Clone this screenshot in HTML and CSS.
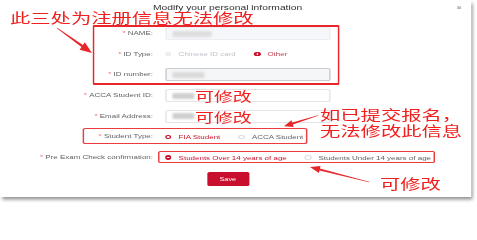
FILE: index.html
```html
<!DOCTYPE html>
<html lang="en">
<head>
<meta charset="utf-8">
<title>Modify your personal information</title>
<link rel="stylesheet" href="styles.css">
</head>
<body>
<div class="stage">
  <div class="card">
    <div class="header">
      <span class="title">Modify your personal information</span>
      <span class="close"><svg viewBox="0 0 10 10" preserveAspectRatio="none"><path d="M1 1L9 9M9 1L1 9" stroke="#aeb1b6" stroke-width="1" vector-effect="non-scaling-stroke" fill="none"/></svg></span>
    </div>
    <form class="form">
      <div class="row">
        <label class="label"><i class="req">*</i>NAME:</label>
        <div class="input is-disabled"><span class="blur blur-name"></span></div>
      </div>
      <div class="row">
        <label class="label"><i class="req">*</i>ID Type:</label>
        <div class="radios">
          <span class="radio is-disabled"><span class="dot"></span>Chinese ID card</span>
          <span class="radio is-checked is-soft"><span class="dot"></span>Other</span>
        </div>
      </div>
      <div class="row">
        <label class="label"><i class="req">*</i>ID number:</label>
        <div class="input is-dim"><span class="blur blur-id"></span></div>
      </div>
      <div class="row">
        <label class="label"><i class="req">*</i>ACCA Student ID:</label>
        <div class="input"><span class="blur blur-acca"></span></div>
      </div>
      <div class="row">
        <label class="label"><i class="req">*</i>Email Address:</label>
        <div class="input"><span class="blur blur-mail"></span></div>
      </div>
      <div class="row">
        <label class="label"><i class="req">*</i>Student Type:</label>
        <div class="radios">
          <span class="radio is-checked"><span class="dot"></span>FIA Student</span>
          <span class="radio"><span class="dot"></span>ACCA Student</span>
        </div>
      </div>
      <div class="row">
        <label class="label"><i class="req">*</i>Pre Exam Check confirmation:</label>
        <div class="radios">
          <span class="radio is-checked"><span class="dot"></span>Students Over 14 years of age</span>
          <span class="radio"><span class="dot"></span>Students Under 14 years of age</span>
        </div>
      </div>
      <div class="row row-foot">
        <span></span>
        <button type="button" class="save">Save</button>
      </div>
    </form>

    <div class="mark mark-1"></div>
    <div class="mark mark-2"></div>
    <div class="mark mark-3"></div>

    <span class="note note-top">此三处为注册信息无法修改</span>
    <span class="note note-edit note-edit-1">可修改</span>
    <span class="note note-edit note-edit-2">可修改</span>
    <span class="note note-lock note-lock-1">如已提交报名，</span>
    <span class="note note-lock note-lock-2">无法修改此信息</span>
    <span class="note note-edit-3">可修改</span>

    <svg class="arrows" viewBox="0 0 471.25 203" preserveAspectRatio="none">
      <polygon points="56.77,28.33 81.5,47.0 79.6,49.7 92,53 84.8,42.3 82.9,45.0 57.23,27.67"/>
      <polygon points="318.1,115.8 292.9,124.6 293.7,126.9 284,126.3 291.5,120.3 292.3,122.6 317.9,115.2"/>
      <polygon points="369.1,181.7 319.9,168.5 320.6,166.1 310,167 318.8,172.9 319.5,170.5 368.9,182.3"/>
    </svg>
  </div>
</div>
</body>
</html>
```
FILE: styles.css
```css
html, body {
  margin: 0;
  padding: 0;
  background: #ffffff;
  overflow: hidden;
}

.stage {
  width: 329px;
  height: 203px;
  transform: scaleX(1.45);
  transform-origin: 0 0;
}

.card {
  position: relative;
  width: 325px;
  height: 197px;
  background: #ffffff;
  box-shadow: 1.2px 2.5px 3px rgba(0, 0, 0, 0.45);
  font-family: "Liberation Sans", Arial, sans-serif;
}

.header {
  display: flex;
  align-items: center;
  height: 17px;
  padding: 0 7px 0 105.5px;
  box-sizing: border-box;
}

.title {
  font-size: 7.1px;
  line-height: 6.5px;
  color: #303133;
  white-space: nowrap;
}

.close {
  margin-left: auto;
  margin-top: -1.6px;
  display: flex;
}

.close svg {
  display: block;
  width: 3.4px;
  height: 3.5px;
}

.form {
  display: flex;
  flex-direction: column;
  gap: 7.7px;
  margin: 10px 0 0;
}

.row {
  display: grid;
  grid-template-columns: 105.5px 1fr;
  column-gap: 8.3px;
  height: 13px;
  align-items: center;
}

.row-foot {
  height: 14px;
}

.label {
  text-align: right;
  font-size: 5.5px;
  line-height: 13px;
  color: #606266;
  white-space: nowrap;
}

.req {
  font-style: normal;
  color: #f56c6c;
  margin-right: 1.5px;
}

.input {
  width: 114.5px;
  height: 13px;
  box-sizing: border-box;
  border: 1px solid #e2e4e8;
  border-radius: 1.5px;
  background: #ffffff;
  display: flex;
  align-items: center;
  padding-left: 4.3px;
}

.input.is-disabled {
  background: #f5f7fa;
  border-color: #eceef2;
}

.input.is-dim {
  background: #f5f6f8;
  border-color: #c9ccd1;
}

.blur {
  display: block;
  height: 6px;
  border-radius: 1px;
  background: #cfcfcf;
  filter: blur(0.8px);
}

.blur-name { width: 27px; background: #dedede; }
.blur-id { width: 22px; background: #dadada; }
.blur-acca { width: 15px; }
.blur-mail { width: 15px; }

.radios {
  display: flex;
  align-items: center;
  white-space: nowrap;
}

.radio {
  display: flex;
  align-items: center;
  gap: 4.8px;
  margin-right: 12.4px;
  font-size: 5.5px;
  line-height: 8px;
  color: #606266;
}

.dot {
  display: flex;
  align-items: center;
  justify-content: center;
  width: 4.6px;
  height: 4.4px;
  box-sizing: border-box;
  border: 1px solid #dcdfe6;
  border-radius: 50%;
  background: #ffffff;
}

.radio.is-disabled {
  color: #c0c4cc;
}

.radio.is-disabled .dot {
  background: #f5f7fa;
  border-color: #e4e7ed;
}

.radio.is-checked {
  color: #c8102e;
}

.radio.is-soft {
  color: #c4404e;
}

.radio.is-checked .dot {
  background: #c8102e;
  border-color: #c8102e;
}

.radio.is-checked .dot::after {
  content: "";
  width: 1.5px;
  height: 1.4px;
  border-radius: 50%;
  background: #ffffff;
}

.save {
  margin-left: 28.8px;
  width: 29px;
  height: 14px;
  padding: 0;
  border: none;
  border-radius: 1.5px;
  background: #c8102e;
  color: #ffffff;
  font-family: "Liberation Sans", Arial, sans-serif;
  font-size: 5px;
  line-height: 14px;
}

.mark {
  position: absolute;
  box-sizing: border-box;
  border: solid #e8262a;
  pointer-events: none;
}

.mark-1 {
  left: 64.1px;
  top: 25px;
  width: 170.4px;
  height: 60px;
  border-width: 2px 1.6px;
  border-radius: 1px;
}

.mark-2 {
  left: 56.6px;
  top: 128px;
  width: 155.9px;
  height: 16px;
  border-width: 1.2px;
  border-color: #ee3b3b;
  border-radius: 2px;
}

.mark-3 {
  left: 109px;
  top: 150.8px;
  width: 191px;
  height: 12.5px;
  border-width: 1.2px;
  border-color: #ee3b3b;
  border-radius: 1.5px;
}

.note {
  position: absolute;
  font-family: "Noto Sans CJK SC", "Noto Sans CJK TC", sans-serif;
  color: #f0201e;
  white-space: nowrap;
}

.note-top {
  left: 6.9px;
  top: 11.4px;
  font-size: 14px;
  line-height: 12px;
}

.note-edit {
  left: 134.5px;
  font-size: 13px;
  line-height: 13px;
}

.note-edit-1 { top: 89px; }
.note-edit-2 { top: 109.5px; }

.note-lock {
  left: 220.7px;
  font-size: 14px;
  line-height: 14px;
}

.note-lock-1 { top: 107.2px; }
.note-lock-2 { top: 123.2px; }

.note-edit-3 {
  left: 262px;
  top: 175.7px;
  font-size: 14px;
  line-height: 14px;
}

.arrows {
  position: absolute;
  left: 0;
  top: 0;
  width: 325px;
  height: 203px;
  overflow: visible;
  pointer-events: none;
  fill: #e8262a;
}
```
